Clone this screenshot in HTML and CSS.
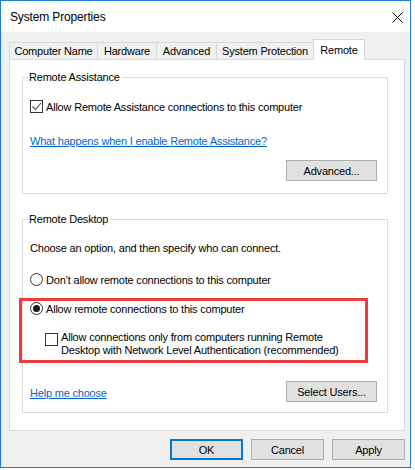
FILE: index.html
```html
<!DOCTYPE html>
<html>
<head>
<meta charset="utf-8">
<link rel="stylesheet" href="styles.css">
</head>
<body>
<div class="window">
  <div class="titlebar">
    <span class="title">System Properties</span>
    <svg class="close" viewBox="0 0 11 11" width="11" height="11"><path d="M0.5 0.5 L10.5 10.5 M10.5 0.5 L0.5 10.5" stroke="#000" stroke-width="1"/></svg>
  </div>
  <div class="body">
    <div class="tabs">
      <div class="tab tab-cn">Computer Name</div>
      <div class="tab tab-hw">Hardware</div>
      <div class="tab tab-adv">Advanced</div>
      <div class="tab tab-sp">System Protection</div>
      <div class="tab tab-rm active">Remote</div>
    </div>
    <div class="panel">
      <fieldset class="group">
        <legend>Remote Assistance</legend>
        <div class="opt">
          <span class="box"><svg viewBox="0 0 11 11" width="11" height="11"><path d="M1.5 5.5 L4.5 8.5 L9.8 2.2" fill="none" stroke="#555" stroke-width="1.1"/></svg></span>
          <span>Allow Remote Assistance connections to this computer</span>
        </div>
        <a class="link link-ra" href="#">What happens when I enable Remote Assistance?</a>
        <div class="btn-end"><button class="btn btn-wide">Advanced...</button></div>
      </fieldset>
      <fieldset class="group group-rd">
        <legend>Remote Desktop</legend>
        <div class="line">Choose an option, and then specify who can connect.</div>
        <div class="opt opt-r1">
          <span class="radio"></span>
          <span>Don’t allow remote connections to this computer</span>
        </div>
        <div class="highlight">
          <div class="opt">
            <span class="radio on"><span class="dot"></span></span>
            <span>Allow remote connections to this computer</span>
          </div>
          <div class="opt opt-nla">
            <span class="box"></span>
            <span class="nla-text">Allow connections only from computers running Remote<br>Desktop with Network Level Authentication (recommended)</span>
          </div>
        </div>
        <div class="row-between">
          <a class="link link-help" href="#">Help me choose</a>
          <button class="btn btn-wide">Select Users...</button>
        </div>
      </fieldset>
    </div>
    <div class="footer">
      <button class="btn btn-dlg btn-ok">OK</button>
      <button class="btn btn-dlg">Cancel</button>
      <button class="btn btn-dlg">Apply</button>
    </div>
  </div>
</div>
</body>
</html>
```
FILE: styles.css
```css
html, body {
  margin: 0;
  background: #ffffff;
}
body {
  font-family: "Liberation Sans", Arial, sans-serif;
  font-size: 11px;
  letter-spacing: -0.2px;
  color: #000;
}
.window {
  width: 411px;
  height: 468px;
  box-sizing: border-box;
  border: 1px solid #1a7ad4;
  display: flex;
  flex-direction: column;
}
.titlebar {
  height: 31px;
  flex: none;
  background: #fff;
  display: flex;
  align-items: center;
  justify-content: space-between;
  padding: 0 7px 0 9px;
}
.title {
  font-size: 12px;
  letter-spacing: -0.15px;
  margin-top: 1px;
}
.close {
  display: block;
  margin-top: 1px;
}
.body {
  flex: 1;
  background: #f0f0f0;
  padding: 7px 5px 0 8px;
  display: flex;
  flex-direction: column;
}
.tabs {
  display: flex;
  align-items: flex-end;
  height: 20px;
  flex: none;
}
.tab {
  height: 17px;
  box-sizing: border-box;
  border: 1px solid #d9d9d9;
  border-bottom: none;
  border-right: none;
  display: flex;
  align-items: center;
  justify-content: center;
  background: #f0f0f0;
}
.tab-cn { width: 88px; }
.tab-hw { width: 59px; }
.tab-adv { width: 60px; }
.tab-sp { width: 97px; }
.tab.active {
  width: 52px;
  height: 21px;
  margin-bottom: -1px;
  border-right: 1px solid #d9d9d9;
  background: #fff;
  position: relative;
  z-index: 1;
  padding-bottom: 1px;
}
.panel {
  height: 372px;
  flex: none;
  box-sizing: border-box;
  border: 1px solid #d9d9d9;
  background: #fff;
  padding: 10px 16px 0 12px;
}
.group {
  margin: 0;
  min-width: 0;
  border: 1px solid #dcdcdc;
  padding: 14px 10px 12px 7px;
}
.group legend {
  padding: 0 2px 0 1px;
  margin-left: -2px;
  line-height: 15px;
  height: 15px;
}
.group-rd {
  margin-top: 18px;
  padding-bottom: 10px;
}
.opt {
  display: flex;
  align-items: center;
  height: 15px;
  gap: 3px;
  white-space: nowrap;
}
.box {
  width: 13px;
  height: 13px;
  box-sizing: border-box;
  border: 1px solid #333;
  background: #fff;
  flex: none;
  display: flex;
  align-items: center;
  justify-content: center;
}
.box svg { display: block; }
.radio {
  width: 13px;
  height: 13px;
  box-sizing: border-box;
  border: 1px solid #333;
  border-radius: 50%;
  background: #fff;
  flex: none;
  display: flex;
  align-items: center;
  justify-content: center;
}
.dot {
  width: 7px;
  height: 7px;
  border-radius: 50%;
  background: #1a1a1a;
}
.link {
  display: block;
  width: max-content;
  color: #0066cc;
  text-decoration: underline;
  line-height: 15px;
}
.link-ra {
  margin-top: 20px;
}
.btn-end {
  display: flex;
  justify-content: flex-end;
  margin-top: 11px;
}
.btn {
  font: inherit;
  letter-spacing: inherit;
  color: #000;
  background: #e1e1e1;
  border: 1px solid #adadad;
  box-sizing: border-box;
  height: 21px;
  padding: 0;
  margin: 0;
}
.btn-wide {
  width: 91px;
}
.line {
  line-height: 15px;
  white-space: nowrap;
}
.opt-r1 {
  margin-top: 16px;
}
.highlight {
  margin: 11px 9px 0 -11px;
  border: 3px solid #ee3b3b;
  padding: 0 0 3px 8px;
}
.opt-nla {
  height: auto;
  align-items: flex-start;
  margin: 15px 0 0 15px;
}
.opt-nla .box {
  margin-top: 2px;
}
.nla-text {
  line-height: 13px;
}
.row-between {
  display: flex;
  justify-content: space-between;
  align-items: center;
  margin-top: 18px;
}
.link-help {
  margin-top: 3px;
}
.footer {
  display: flex;
  justify-content: flex-end;
  gap: 8px;
  margin-top: 8px;
}
.btn-dlg {
  width: 73px;
}
.btn-ok {
  border: 2px solid #0078d7;
}
```
